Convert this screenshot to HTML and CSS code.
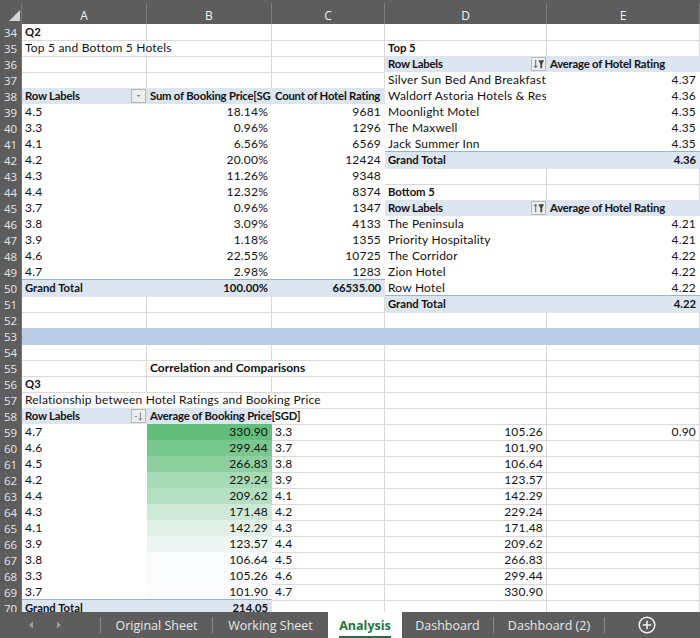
FILE: index.html
```html
<!DOCTYPE html>
<html>
<head>
<meta charset="utf-8">
<link rel="stylesheet" href="styles.css">
</head>
<body>
<div class="colhead">
  <div class="corner"><svg width="22" height="24" viewBox="0 0 22 24"><polygon points="9,21 20,21 20,10" fill="#d2d2d2"/></svg></div>
  <div class="lt">A</div><div class="lt">B</div><div class="lt">C</div><div class="lt">D</div><div class="lt">E</div>
</div>
<div class="sheet">
  <div class="r"><div class="h">34</div><div class="c b">Q2</div><div class="c"></div><div class="c"></div><div class="c"></div><div class="c"></div></div>
  <div class="r"><div class="h">35</div><div class="c s2">Top 5 and Bottom 5 Hotels</div><div class="c"></div><div class="c b">Top 5</div><div class="c"></div></div>
  <div class="r"><div class="h">36</div><div class="c"></div><div class="c"></div><div class="c"></div>
    <div class="c ph b flt"><span>Row Labels</span><span class="dd"><svg width="14" height="12" viewBox="0 0 14 12"><path d="M4 1.5V10M2 8l2 2 2-2" stroke="#555" stroke-width="1" fill="none"/><polygon points="7,2 13,2 11,6 11,10 9,11 9,6" fill="#444"/></svg></span></div>
    <div class="c ph b">Average of Hotel Rating</div></div>
  <div class="r"><div class="h">37</div><div class="c"></div><div class="c"></div><div class="c"></div><div class="c pv">Silver Sun Bed And Breakfast</div><div class="c pv n">4.37</div></div>
  <div class="r"><div class="h">38</div>
    <div class="c ph b flt"><span>Row Labels</span><span class="dd"><svg width="14" height="12" viewBox="0 0 14 12"><polygon points="5,5 9,5 7,7" fill="#777"/></svg></span></div>
    <div class="c ph b">Sum of Booking Price[SGD]</div><div class="c ph b">Count of Hotel Rating</div><div class="c pv">Waldorf Astoria Hotels &amp; Resorts</div><div class="c pv n">4.36</div></div>
  <div class="r"><div class="h">39</div><div class="c pv">4.5</div><div class="c pv n">18.14%</div><div class="c pv n">9681</div><div class="c pv">Moonlight Motel</div><div class="c pv n">4.35</div></div>
  <div class="r"><div class="h">40</div><div class="c pv">3.3</div><div class="c pv n">0.96%</div><div class="c pv n">1296</div><div class="c pv">The Maxwell</div><div class="c pv n">4.35</div></div>
  <div class="r"><div class="h">41</div><div class="c pv">4.1</div><div class="c pv n">6.56%</div><div class="c pv n">6569</div><div class="c pv">Jack Summer Inn</div><div class="c pv n">4.35</div></div>
  <div class="r"><div class="h">42</div><div class="c pv">4.2</div><div class="c pv n">20.00%</div><div class="c pv n">12424</div><div class="c gt b">Grand Total</div><div class="c gt b n">4.36</div></div>
  <div class="r"><div class="h">43</div><div class="c pv">4.3</div><div class="c pv n">11.26%</div><div class="c pv n">9348</div><div class="c"></div><div class="c"></div></div>
  <div class="r"><div class="h">44</div><div class="c pv">4.4</div><div class="c pv n">12.32%</div><div class="c pv n">8374</div><div class="c b">Bottom 5</div><div class="c"></div></div>
  <div class="r"><div class="h">45</div><div class="c pv">3.7</div><div class="c pv n">0.96%</div><div class="c pv n">1347</div>
    <div class="c ph b flt"><span>Row Labels</span><span class="dd"><svg width="14" height="12" viewBox="0 0 14 12"><path d="M4 10.5V2M2 4l2-2 2 2" stroke="#555" stroke-width="1" fill="none"/><polygon points="7,2 13,2 11,6 11,10 9,11 9,6" fill="#444"/></svg></span></div>
    <div class="c ph b">Average of Hotel Rating</div></div>
  <div class="r"><div class="h">46</div><div class="c pv">3.8</div><div class="c pv n">3.09%</div><div class="c pv n">4133</div><div class="c pv">The Peninsula</div><div class="c pv n">4.21</div></div>
  <div class="r"><div class="h">47</div><div class="c pv">3.9</div><div class="c pv n">1.18%</div><div class="c pv n">1355</div><div class="c pv">Priority Hospitality</div><div class="c pv n">4.21</div></div>
  <div class="r"><div class="h">48</div><div class="c pv">4.6</div><div class="c pv n">22.55%</div><div class="c pv n">10725</div><div class="c pv">The Corridor</div><div class="c pv n">4.22</div></div>
  <div class="r"><div class="h">49</div><div class="c pv">4.7</div><div class="c pv n">2.98%</div><div class="c pv n">1283</div><div class="c pv">Zion Hotel</div><div class="c pv n">4.22</div></div>
  <div class="r"><div class="h">50</div><div class="c gt b">Grand Total</div><div class="c gt b n">100.00%</div><div class="c gt b n">66535.00</div><div class="c pv">Row Hotel</div><div class="c pv n">4.22</div></div>
  <div class="r"><div class="h">51</div><div class="c"></div><div class="c"></div><div class="c"></div><div class="c gt b">Grand Total</div><div class="c gt b n">4.22</div></div>
  <div class="r"><div class="h">52</div><div class="c"></div><div class="c"></div><div class="c"></div><div class="c"></div><div class="c"></div></div>
  <div class="r"><div class="h">53</div><div class="c band"></div><div class="c band"></div><div class="c band"></div><div class="c band"></div><div class="c band"></div></div>
  <div class="r"><div class="h">54</div><div class="c"></div><div class="c"></div><div class="c"></div><div class="c"></div><div class="c"></div></div>
  <div class="r"><div class="h">55</div><div class="c"></div><div class="c s2 b title">Correlation and Comparisons</div><div class="c"></div><div class="c"></div></div>
  <div class="r"><div class="h">56</div><div class="c b">Q3</div><div class="c"></div><div class="c"></div><div class="c"></div><div class="c"></div></div>
  <div class="r"><div class="h">57</div><div class="c s3">Relationship between Hotel Ratings and Booking Price</div><div class="c"></div><div class="c"></div></div>
  <div class="r"><div class="h">58</div>
    <div class="c ph b flt"><span>Row Labels</span><span class="dd"><svg width="14" height="12" viewBox="0 0 14 12"><path d="M3 6.5h2.5M9 2v8.5M7 8.5l2 2 2-2" stroke="#777" stroke-width="1" fill="none"/></svg></span></div>
    <div class="c ph b ov">Average of Booking Price[SGD]</div><div class="c"></div><div class="c"></div><div class="c"></div></div>
  <div class="r"><div class="h">59</div><div class="c pv">4.7</div><div class="c gs n" style="--g:rgb(99,190,123)">330.90</div><div class="c">3.3</div><div class="c n">105.26</div><div class="c n">0.90</div></div>
  <div class="r"><div class="h">60</div><div class="c pv">4.6</div><div class="c gs n" style="--g:rgb(120,199,141)">299.44</div><div class="c">3.7</div><div class="c n">101.90</div><div class="c"></div></div>
  <div class="r"><div class="h">61</div><div class="c pv">4.5</div><div class="c gs n" style="--g:rgb(142,207,160)">266.83</div><div class="c">3.8</div><div class="c n">106.64</div><div class="c"></div></div>
  <div class="r"><div class="h">62</div><div class="c pv">4.2</div><div class="c gs n" style="--g:rgb(167,218,182)">229.24</div><div class="c">3.9</div><div class="c n">123.57</div><div class="c"></div></div>
  <div class="r"><div class="h">63</div><div class="c pv">4.4</div><div class="c gs n" style="--g:rgb(180,223,193)">209.62</div><div class="c">4.1</div><div class="c n">142.29</div><div class="c"></div></div>
  <div class="r"><div class="h">64</div><div class="c pv">4.3</div><div class="c gs n" style="--g:rgb(206,233,215)">171.48</div><div class="c">4.2</div><div class="c n">229.24</div><div class="c"></div></div>
  <div class="r"><div class="h">65</div><div class="c pv">4.1</div><div class="c gs n" style="--g:rgb(225,241,232)">142.29</div><div class="c">4.3</div><div class="c n">171.48</div><div class="c"></div></div>
  <div class="r"><div class="h">66</div><div class="c pv">3.9</div><div class="c gs n" style="--g:rgb(238,246,243)">123.57</div><div class="c">4.4</div><div class="c n">209.62</div><div class="c"></div></div>
  <div class="r"><div class="h">67</div><div class="c pv">3.8</div><div class="c gs n" style="--g:rgb(249,251,252)">106.64</div><div class="c">4.5</div><div class="c n">266.83</div><div class="c"></div></div>
  <div class="r"><div class="h">68</div><div class="c pv">3.3</div><div class="c gs n" style="--g:rgb(250,251,253)">105.26</div><div class="c">4.6</div><div class="c n">299.44</div><div class="c"></div></div>
  <div class="r"><div class="h">69</div><div class="c pv">3.7</div><div class="c gs n" style="--g:rgb(252,252,255)">101.90</div><div class="c">4.7</div><div class="c n">330.90</div><div class="c"></div></div>
  <div class="r"><div class="h">70</div><div class="c gt b">Grand Total</div><div class="c gt b n">214.05</div><div class="c"></div><div class="c"></div><div class="c"></div></div>
</div>
<div class="tabs">
  <div class="nav">
    <svg width="100" height="26" viewBox="0 0 100 26"><polygon points="33,9.5 33,16.5 29,13" fill="#9c9c9c"/><polygon points="57,9.5 57,16.5 61,13" fill="#9c9c9c"/></svg>
  </div>
  <div class="sep"></div>
  <div class="tab w1">Original Sheet</div>
  <div class="sep"></div>
  <div class="tab w2">Working Sheet</div>
  <div class="tab active"><span>Analysis</span></div>
  <div class="tab w4">Dashboard</div>
  <div class="sep"></div>
  <div class="tab w5">Dashboard (2)</div>
  <div class="sep"></div>
  <div class="plus"><svg width="20" height="20" viewBox="0 0 20 20"><circle cx="10" cy="10" r="7.8" stroke="#f2f2f2" stroke-width="1.5" fill="none"/><path d="M10 5.8v8.4M5.8 10h8.4" stroke="#f2f2f2" stroke-width="1.6"/></svg></div>
</div>
</body>
</html>
```

FILE: styles.css
```css
* { box-sizing: border-box; }
html, body { margin: 0; padding: 0; }
body {
  width: 700px;
  height: 638px;
  overflow: hidden;
  background: #fff;
  font-family: "Lato", "Liberation Sans", sans-serif;
  font-size: 12px;
  color: #111;
}
.colhead {
  display: grid;
  grid-template-columns: 22px 125px 125px 113px 162px 153px;
  height: 24px;
  background: #5d5d5d;
}
.corner { border-right: 1px solid #777; margin-top: 3px; height: 21px; }
.corner svg { display: block; margin-top: -3px; }
.lt {
  margin-top: 3px;
  border-right: 1px solid #7c7c7c;
  display: flex;
  align-items: flex-end;
  justify-content: center;
  color: #f2f2f2;
  font-family: "Open Sans", sans-serif;
  font-size: 12px;
  line-height: 16px;
}
.sheet { height: 588px; overflow: hidden; }
.r {
  display: grid;
  grid-template-columns: 22px 125px 125px 113px 162px 153px;
  height: 16px;
}
.h {
  background: #5d5d5d;
  color: #e6e6e6;
  font-family: "Open Sans", sans-serif;
  font-size: 11.5px;
  line-height: 15px;
  padding-top: 1px;
  text-align: center;
  border-bottom: 1px solid #727272;
  border-right: 1px solid #727272;
}
.c {
  border-right: 1px solid #d9d9d9;
  border-bottom: 1px solid #d9d9d9;
  padding: 1px 3px 0;
  line-height: 14px;
  white-space: nowrap;
  overflow: hidden;
  letter-spacing: 0.2px;
}
.s2 { grid-column: span 2; }
.s3 { grid-column: span 3; }
.n { text-align: right; }
.b { font-weight: 700; font-size: 11.3px; letter-spacing: 0; }
.title { font-size: 12px; }
.ov { overflow: visible; }
.pv { background: #fff; border-color: #fff; }
.ph { background: #dce6f1; border-color: #dce6f1; letter-spacing: -0.2px; }
.gt {
  background: #dce6f1;
  border-color: #dce6f1;
  box-shadow: 0 -1px 0 #95b3d7;
}
.band { background: #b8cce4; border-color: #b8cce4; }
.gs { background: var(--g); border-color: var(--g); }
.flt {
  display: flex;
  align-items: center;
  justify-content: space-between;
  padding-right: 0;
  padding-top: 0;
}
.flt span:first-child { overflow: hidden; }
.dd {
  flex: none;
  width: 15px;
  height: 14px;
  border: 1px solid #b8b8b8;
  background: #efefef;
  display: flex;
  align-items: center;
  justify-content: center;
}
.dd svg { display: block; }
.tabs {
  height: 26px;
  background: #5d5d5d;
  display: flex;
  align-items: stretch;
  font-family: "Open Sans", sans-serif;
  font-size: 12.5px;
  color: #e8e8e8;
}
.nav { width: 100px; flex: none; }
.nav svg { display: block; }
.sep { width: 1px; flex: none; background: #8a8a8a; margin: 5px 0; }
.tab {
  flex: none;
  display: flex;
  align-items: center;
  justify-content: center;
  white-space: nowrap;
}
.w1 { width: 111px; }
.w2 { width: 115px; }
.w4 { width: 91px; }
.w5 { width: 110px; }
.active {
  width: 74px;
  background: #fff;
  color: #217346;
  font-weight: 700;
}
.active span {
  height: 26px;
  line-height: 25px;
  border-bottom: 2px solid #217346;
  padding-top: 1px;
}
.plus {
  flex: 1;
  display: flex;
  align-items: center;
  justify-content: flex-start;
  padding-left: 32px;
}
.plus svg { display: block; }
```
